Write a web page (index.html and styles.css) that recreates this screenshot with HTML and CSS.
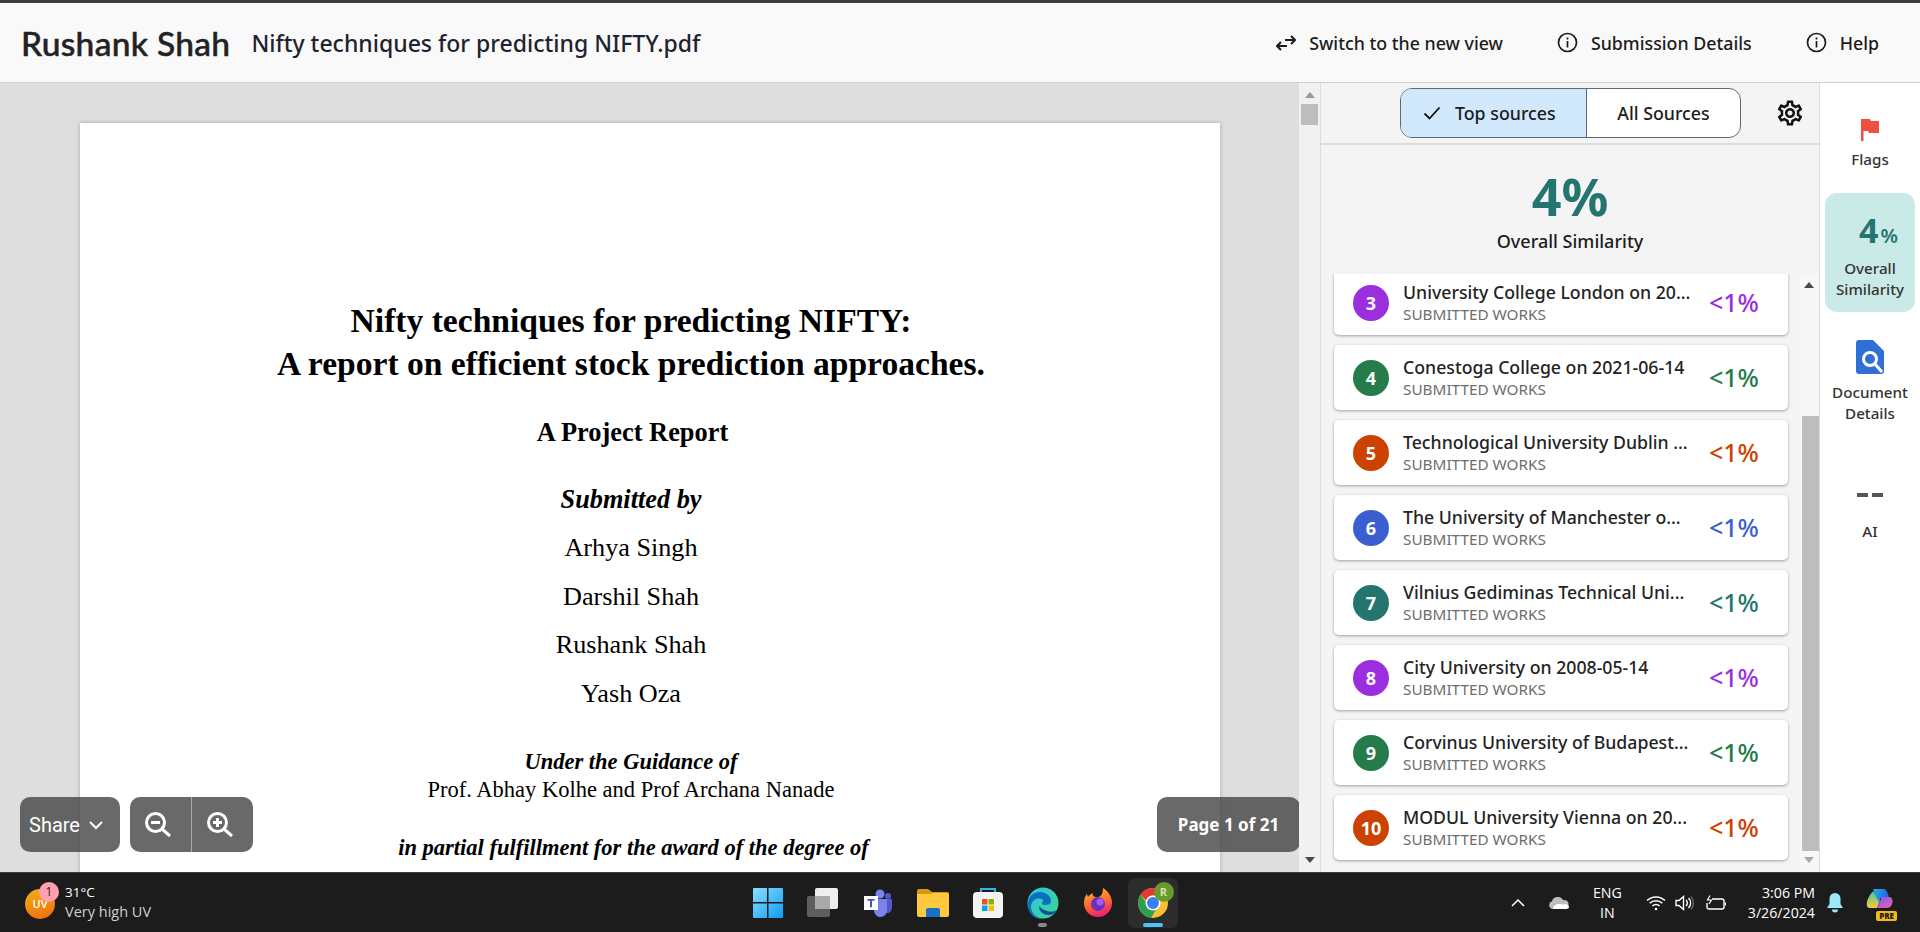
FILE: index.html
```html
<!DOCTYPE html>
<html lang="en">
<head>
    <meta charset="UTF-8">
    <title>Nifty techniques for predicting NIFTY.pdf</title>
    <link rel="stylesheet" href="styles.css">
</head>
<body>
    <header class="topbar">
        <div class="doc-title">
            <span class="author">Rushank Shah</span>
            <span class="file-name">Nifty techniques for predicting NIFTY.pdf</span>
        </div>
        <nav class="top-links">
            <a class="top-link link-switch">
                <svg width="20" height="16" viewBox="0 0 20 16" fill="none" stroke="#1c1c1c" stroke-width="2"><path d="M9 5h10M15 1l4 4-4 4"/><path d="M1 11h10M5 7l-4 4 4 4"/></svg>
                Switch to the new view
            </a>
            <a class="top-link link-details">
                <svg width="21" height="21" viewBox="0 0 21 21" fill="none" stroke="#1c1c1c" stroke-width="1.7"><circle cx="10.500" cy="10.500" r="9"/><path d="M10.500 9v6.500M10.500 5.500v2"/></svg>
                Submission Details
            </a>
            <a class="top-link link-help">
                <svg width="21" height="21" viewBox="0 0 21 21" fill="none" stroke="#1c1c1c" stroke-width="1.7"><circle cx="10.500" cy="10.500" r="9"/><path d="M10.500 9v6.500M10.500 5.500v2"/></svg>
                Help
            </a>
        </nav>
    </header>

    <main class="workspace">
        <section class="viewer">
            <article class="page">
                <h1 class="report-title">Nifty techniques for predicting NIFTY:<br>A report on efficient stock prediction approaches.</h1>
                <p class="report-kind">A Project Report</p>
                <p class="submitted">Submitted by</p>
                <p class="student">Arhya Singh</p>
                <p class="student">Darshil Shah</p>
                <p class="student">Rushank Shah</p>
                <p class="student">Yash Oza</p>
                <p class="guidance">Under the Guidance of</p>
                <p class="guide">Prof. Abhay Kolhe and Prof Archana Nanade</p>
                <p class="fulfil">in partial fulfillment for the award of the degree of</p>
            </article>
            <div class="float-tools">
                <button class="float-btn share-btn">Share
                    <svg width="16" height="10" viewBox="0 0 16 10" fill="none" stroke="#fff" stroke-width="2"><path d="M2 2l6 6 6-6"/></svg>
                </button>
                <div class="float-btn zoom-group">
                    <span class="zoom-cell">
                        <svg width="28" height="28" viewBox="0 0 28 28" fill="none" stroke="#fff" stroke-width="3"><circle cx="11.500" cy="11.500" r="9"/><path d="M18 18l8 7M7 11.500h9"/></svg>
                    </span>
                    <span class="zoom-cell">
                        <svg width="28" height="28" viewBox="0 0 28 28" fill="none" stroke="#fff" stroke-width="3"><circle cx="11.500" cy="11.500" r="9"/><path d="M18 18l8 7M7 11.500h9M11.500 7v9"/></svg>
                    </span>
                </div>
                <div class="float-btn page-count">Page 1 of 21</div>
            </div>
        </section>

        <div class="scroll-track doc-scroll">
            <span class="arrow-up"></span>
            <span class="doc-thumb"></span>
            <span class="arrow-down"></span>
        </div>

        <aside class="sources">
            <div class="sources-head">
                <div class="toggle">
                    <span class="toggle-item is-on">
                        <svg width="18" height="14" viewBox="0 0 18 14" fill="none" stroke="#111" stroke-width="1.800"><path d="M1.500 7.500l5 5L16.500 1.500"/></svg>
                        Top sources
                    </span>
                    <span class="toggle-item">All Sources</span>
                </div>
                <svg class="gear" width="30" height="30" viewBox="0 0 24 24" fill="#111"><path d="M19.43 12.98c.04-.32.07-.64.07-.98 0-.34-.03-.66-.07-.98l2.11-1.65c.19-.15.24-.42.12-.64l-2-3.46c-.09-.16-.26-.25-.44-.25-.06 0-.12.01-.17.03l-2.49 1c-.52-.4-1.08-.73-1.69-.98l-.38-2.65C14.46 2.18 14.25 2 14 2h-4c-.25 0-.46.18-.49.42l-.38 2.65c-.61.25-1.17.59-1.69.98l-2.49-1c-.06-.02-.12-.03-.18-.03-.17 0-.34.09-.43.25l-2 3.46c-.13.22-.07.49.12.64l2.11 1.65c-.04.32-.07.65-.07.98 0 .33.03.66.07.98l-2.11 1.65c-.19.15-.24.42-.12.64l2 3.46c.09.16.26.25.44.25.06 0 .12-.01.17-.03l2.49-1c.52.4 1.08.73 1.69.98l.38 2.65c.03.24.24.42.49.42h4c.25 0 .46-.18.49-.42l.38-2.65c.61-.25 1.17-.59 1.69-.98l2.49 1c.06.02.12.03.18.03.17 0 .34-.09.43-.25l2-3.46c.12-.22.07-.49-.12-.64l-2.11-1.65zM17.45 11.27c.04.31.05.52.05.73 0 .21-.02.43-.05.73l-.14 1.13.89.7 1.08.84-.7 1.21-1.27-.51-1.04-.42-.9.68c-.43.32-.84.56-1.25.73l-1.06.43-.16 1.13-.2 1.35h-1.4l-.19-1.35-.16-1.13-1.06-.43c-.43-.18-.83-.41-1.23-.71l-.91-.7-1.06.43-1.27.51-.7-1.21 1.08-.84.89-.7-.14-1.13c-.03-.31-.05-.54-.05-.74s.02-.43.05-.73l.14-1.13-.89-.7-1.08-.84.7-1.21 1.27.51 1.04.42.9-.68c.43-.32.84-.56 1.25-.73l1.06-.43.16-1.13.2-1.35h1.39l.19 1.35.16 1.13 1.06.43c.43.18.83.41 1.23.71l.91.7 1.06-.43 1.27-.51.7 1.21-1.07.85-.89.7.14 1.13zM12 8c-2.21 0-4 1.79-4 4s1.79 4 4 4 4-1.790 4-4-1.790-4-4-4zm0 6c-1.100 0-2-.9-2-2s.9-2 2-2 2 .9 2 2-.9 2-2 2z"/></svg>
            </div>
            <div class="overall">
                <div class="overall-num">4%</div>
                <div class="overall-label">Overall Similarity</div>
            </div>
            <div class="sources-body">
                <ul class="source-list">
                    <li class="source-card c-purple">
                        <span class="source-num">3</span>
                        <div class="source-text"><div class="source-name">University College London on 20...</div><div class="source-type">SUBMITTED WORKS</div></div>
                        <span class="source-pct">&lt;1%</span>
                    </li>
                    <li class="source-card c-green">
                        <span class="source-num">4</span>
                        <div class="source-text"><div class="source-name">Conestoga College on 2021-06-14</div><div class="source-type">SUBMITTED WORKS</div></div>
                        <span class="source-pct">&lt;1%</span>
                    </li>
                    <li class="source-card c-orange">
                        <span class="source-num">5</span>
                        <div class="source-text"><div class="source-name">Technological University Dublin ...</div><div class="source-type">SUBMITTED WORKS</div></div>
                        <span class="source-pct">&lt;1%</span>
                    </li>
                    <li class="source-card c-blue">
                        <span class="source-num">6</span>
                        <div class="source-text"><div class="source-name">The University of Manchester o...</div><div class="source-type">SUBMITTED WORKS</div></div>
                        <span class="source-pct">&lt;1%</span>
                    </li>
                    <li class="source-card c-teal">
                        <span class="source-num">7</span>
                        <div class="source-text"><div class="source-name">Vilnius Gediminas Technical Uni...</div><div class="source-type">SUBMITTED WORKS</div></div>
                        <span class="source-pct">&lt;1%</span>
                    </li>
                    <li class="source-card c-purple">
                        <span class="source-num">8</span>
                        <div class="source-text"><div class="source-name">City University on 2008-05-14</div><div class="source-type">SUBMITTED WORKS</div></div>
                        <span class="source-pct">&lt;1%</span>
                    </li>
                    <li class="source-card c-green">
                        <span class="source-num">9</span>
                        <div class="source-text"><div class="source-name">Corvinus University of Budapest...</div><div class="source-type">SUBMITTED WORKS</div></div>
                        <span class="source-pct">&lt;1%</span>
                    </li>
                    <li class="source-card c-orange">
                        <span class="source-num">10</span>
                        <div class="source-text"><div class="source-name">MODUL University Vienna on 20...</div><div class="source-type">SUBMITTED WORKS</div></div>
                        <span class="source-pct">&lt;1%</span>
                    </li>
                </ul>
                <div class="scroll-track list-scroll">
                    <span class="arrow-up"></span>
                    <span class="list-thumb"></span>
                    <span class="arrow-down faint"></span>
                </div>
            </div>
        </aside>

        <nav class="rail">
            <div class="rail-item rail-flags">
                <svg width="18" height="22" viewBox="0 0 18 22"><path d="M0 0h9l1 2h8v12H8l-1-2H2.500v10H0z" fill="#f04e3e"/></svg>
                <span>Flags</span>
            </div>
            <div class="rail-item rail-sim">
                <div class="rail-num">4<small>%</small></div>
                <span>Overall<br>Similarity</span>
            </div>
            <div class="rail-item rail-doc">
                <svg width="28" height="34" viewBox="0 0 28 34"><path d="M3 0h14l11 11v20a3 3 0 0 1-3 3H3a3 3 0 0 1-3-3V3a3 3 0 0 1 3-3z" fill="#2f6fd6"/><circle cx="14" cy="19" r="6.500" fill="none" stroke="#fff" stroke-width="3"/><path d="M19 24l7 8" stroke="#fff" stroke-width="3"/></svg>
                <span>Document<br>Details</span>
            </div>
            <div class="rail-item rail-ai">
                <div class="ai-dashes"><i></i><i></i></div>
                <span>AI</span>
            </div>
        </nav>
    </main>

    <footer class="taskbar">
        <div class="weather">
            <div class="uv-badge">UV<span class="uv-count">1</span></div>
            <div class="weather-text">
                <div class="temp">31°C</div>
                <div class="uv-label">Very high UV</div>
            </div>
        </div>

        <div class="task-apps">
            <span class="app">
                <svg width="30" height="30" viewBox="0 0 30 30"><defs><linearGradient id="win" x1="0" y1="0" x2="1" y2="1"><stop offset="0" stop-color="#8be0ff"/><stop offset="1" stop-color="#0f9bf5"/></linearGradient></defs><path d="M1 0h13v14H0V1a1 1 0 0 1 1-1zM15.500 0H29a1 1 0 0 1 1 1v13H15.500zM0 15.500h14V30H1a1 1 0 0 1-1-1zM15.500 15.500H30V29a1 1 0 0 1-1 1H15.500z" fill="url(#win)"/></svg>
            </span>
            <span class="app">
                <svg width="32" height="30" viewBox="0 0 32 30"><rect x="0" y="8" width="23" height="21" rx="2" fill="#5e5e5e"/><rect x="8" y="0" width="23" height="21" rx="2" fill="#eeeeee"/><rect x="8" y="8" width="15" height="13" fill="#a9a9a9"/></svg>
            </span>
            <span class="app">
                <svg width="30" height="30" viewBox="0 0 30 30"><circle cx="17" cy="6" r="4.500" fill="#7b83eb"/><circle cx="25" cy="8" r="3" fill="#5059c9"/><path d="M20 11h9v9a5 5 0 0 1-6 5z" fill="#5059c9"/><path d="M10 11h14v11a6.500 6.500 0 0 1-13 1z" fill="#7b83eb"/><rect x="1" y="8" width="14" height="14" fill="#fff"/><path d="M4.500 11h7v1.800H9v6.500H7v-6.500H4.500z" fill="#4b53bc"/></svg>
            </span>
            <span class="app">
                <svg width="32" height="28" viewBox="0 0 32 28"><path d="M2 0h9l4 3h15a2 2 0 0 1 2 2v4H0V2a2 2 0 0 1 2-2z" fill="#d89a0a"/><path d="M0 5h13l3-1h14a2 2 0 0 1 2 2v20a2 2 0 0 1-2 2H2a2 2 0 0 1-2-2z" fill="#ffc83d"/><path d="M9 21a2 2 0 0 1 2-2h10a2 2 0 0 1 2 2v7H9z" fill="#1572c8"/></svg>
            </span>
            <span class="app">
                <svg width="30" height="30" viewBox="0 0 30 30"><path d="M8 6V1h14v5" fill="none" stroke="#29b6e8" stroke-width="2"/><rect x="0" y="4" width="30" height="26" rx="4" fill="#f3f3f3"/><rect x="9" y="11" width="5.500" height="5.500" fill="#f25022"/><rect x="15.500" y="11" width="5.500" height="5.500" fill="#7fba00"/><rect x="9" y="17.500" width="5.500" height="5.500" fill="#00a4ef"/><rect x="15.500" y="17.500" width="5.500" height="5.500" fill="#ffb900"/></svg>
            </span>
            <span class="app has-dot">
                <svg width="32" height="32" viewBox="0 0 32 32"><defs><linearGradient id="edge" x1="0" y1="0" x2="1" y2="1"><stop offset="0" stop-color="#2fc4e6"/><stop offset="1" stop-color="#3dd68c"/></linearGradient></defs><circle cx="16" cy="16" r="15.500" fill="url(#edge)"/><path d="M1 17C1 9 7 5 13 5c6 0 11 4 11 9 0 3-3 4-6 4-2 0-3-1-3-2 1-2 2-3 0-4-5-2-11 1-11 8 0 7 7 11.500 12 11.500C7 33 1 26 1 17z" fill="#0c6fc2"/><path d="M12 19c0 6 5 9 10 9 3 0 6-2 8-5-3 2-7 2-10 1-4-1-6-3-8-5z" fill="#0b4f9b"/></svg>
            </span>
            <span class="app">
                <svg width="30" height="30" viewBox="0 0 30 30"><defs><linearGradient id="fox" x1="0" y1="0" x2="0.300" y2="1"><stop offset="0" stop-color="#ffbd3f"/><stop offset="0.600" stop-color="#ff6a2a"/><stop offset="1" stop-color="#f0266e"/></linearGradient></defs><path d="M20 0c6 4 9 9 9 15a14 14 0 0 1-28 0c0-4 1-7 3-9l1 3c1-2 3-3 5-4-1 3 1 4 4 4 3 0 6-2 6-9z" fill="url(#fox)"/><circle cx="15" cy="16" r="7" fill="#6b2fbd"/><circle cx="17" cy="14" r="3.500" fill="#a35cf0"/></svg>
            </span>
            <span class="app is-active">
                <svg width="30" height="30" viewBox="0 0 30 30"><circle cx="15" cy="15" r="15" fill="#fbc02d"/><path d="M15 0a15 15 0 0 1 13 7.500H15a7.500 7.500 0 0 0-7 4.800L2.600 6.700A15 15 0 0 1 15 0z" fill="#e53935"/><path d="M2.600 6.700A15 15 0 0 0 13 30l6.500-11a7.500 7.500 0 0 1-11-4z" fill="#2e9e4f"/><circle cx="15" cy="15" r="7.500" fill="#fff"/><circle cx="15" cy="15" r="6" fill="#3a7ff0"/></svg>
                <span class="profile-dot">R</span>
            </span>
        </div>

        <div class="tray">
            <svg class="tray-chevron" width="14" height="8" viewBox="0 0 14 8" fill="none" stroke="#fff" stroke-width="1.500"><path d="M1 7l6-6 6 6"/></svg>
            <svg class="tray-cloud" width="20" height="12" viewBox="0 0 20 12"><path d="M4 12a4 4 0 0 1-1-7.800A6 6 0 0 1 14 3a4.500 4.500 0 0 1 2 9z" fill="#bdbdbd"/><path d="M4 12c0-3 3-5 6-5 2 0 5 1 6 0 2 0 4 2 4 3s-1 2-3 2z" fill="#fff"/></svg>
            <div class="lang">ENG<br>IN</div>
            <svg class="tray-wifi" width="20" height="16" viewBox="0 0 20 16" fill="none" stroke="#fff" stroke-width="1.500"><path d="M1 5.500a13 13 0 0 1 18 0M3.700 8.300a9 9 0 0 1 12.600 0M6.400 11a5 5 0 0 1 7.200 0"/><circle cx="10" cy="14" r="1.300" fill="#fff" stroke="none"/></svg>
            <svg class="tray-sound" width="20" height="16" viewBox="0 0 20 16" fill="none" stroke="#fff" stroke-width="1.400"><path d="M1 5.500h3L8.500 1.500v13L4 10.500H1z"/><path d="M11 5a4 4 0 0 1 0 6M13.500 3a7 7 0 0 1 0 10"/><path d="M16 1.500a10 10 0 0 1 0 13" stroke="#666"/></svg>
            <svg class="tray-battery" width="20" height="16" viewBox="0 0 20 16" fill="none" stroke="#fff" stroke-width="1.400"><path d="M6 4h10a2 2 0 0 1 2 2v6a2 2 0 0 1-2 2H3a2 2 0 0 1-2-2V8"/><path d="M19.500 7.500v3"/><path d="M4 .5L1.500 5h4L3 9" stroke-width="1.200"/></svg>
            <div class="clock"><div>3:06 PM</div><div>3/26/2024</div></div>
            <svg class="tray-bell" width="16" height="20" viewBox="0 0 16 20"><path d="M8 0a5.500 5.500 0 0 1 5.500 5.500V11L16 15H0l2.500-4V5.500A5.500 5.500 0 0 1 8 0z" fill="#9ce8fb"/><path d="M5 16.500h6a3 3 0 0 1-6 0z" fill="#9ce8fb"/></svg>
            <div class="copilot">
                <svg width="28" height="24" viewBox="0 0 28 24"><defs><linearGradient id="cop" x1="0" y1="0" x2="1" y2="0.300"><stop offset="0" stop-color="#1fb6ea"/><stop offset="1" stop-color="#2a5fe0"/></linearGradient><linearGradient id="cop2" x1="0" y1="0" x2="0" y2="1"><stop offset="0" stop-color="#3cc8a0"/><stop offset="1" stop-color="#ffc83d"/></linearGradient><linearGradient id="cop3" x1="0" y1="0" x2="1" y2="1"><stop offset="0" stop-color="#7a5ae8"/><stop offset="1" stop-color="#f05fb0"/></linearGradient></defs><path d="M7 3C2 9 0 14 1 18c.5 2 2 2 4 2h6l3-8C11 9 9 6 7 3z" fill="url(#cop2)"/><path d="M7 1h10c3 0 4 2 5 5l1 3h-8l-2 5L9 7C8 4 8 2 7 1z" fill="url(#cop)"/><path d="M15 9h9c3 1 3 5 2 7-1 3-3 4-6 4h-9l4-9z" fill="url(#cop3)"/></svg>
                <span class="pre-tag">PRE</span>
            </div>
        </div>
    </footer>
</body>
</html>
```

FILE: styles.css
```css
* {
    box-sizing: border-box;
}
html, body {
    height: 100%;
}
body {
    margin: 0;
    width: 1920px;
    height: 932px;
    overflow: hidden;
    display: flex;
    flex-direction: column;
    font-family: 'Noto Sans', sans-serif;
    color: #1c1c1c;
    background: #dedede;
}
p, h1, ul {
    margin: 0;
    padding: 0;
}

/* top bar */
.topbar {
    height: 83px;
    flex: none;
    border-top: 3px solid #3c3c3c;
    border-bottom: 1px solid #cfcfcf;
    background: #f9f9f9;
    display: flex;
    align-items: center;
    justify-content: space-between;
    padding: 0 41px 0 21px;
}
.doc-title {
    display: flex;
    align-items: center;
    gap: 21px;
}
.author {
    font-family: Lato, sans-serif;
    font-size: 33.500px;
    font-weight: 500;
    letter-spacing: 0.3px;
    -webkit-text-stroke: 0.5px #222;
    color: #222;
}
.file-name {
    font-size: 23px;
    font-weight: 500;
    color: #1f2330;
}
.top-links {
    display: flex;
    align-items: center;
}
.top-link {
    display: flex;
    align-items: center;
    gap: 13px;
    font-size: 17.800px;
    font-weight: 500;
}
.link-details {
    margin-left: 54px;
}
.link-help {
    margin-left: 54px;
}

/* main area */
.workspace {
    flex: 1;
    min-height: 0;
    display: flex;
}
.viewer {
    width: 1299px;
    flex: none;
    position: relative;
    overflow: hidden;
    background: #dedede;
    padding: 40px 0 0 80px;
}
.page {
    width: 1140px;
    height: 1400px;
    background: #fff;
    box-shadow: 0 0 4px rgba(0,0,0,0.25);
    padding: 176px 38px 0 0;
    text-align: center;
    font-family: 'Liberation Serif', serif;
    color: #000;
}
.report-title {
    font-size: 33.600px;
    line-height: 43px;
    font-weight: 700;
}
.report-kind {
    margin-top: 32px;
    padding-left: 3px;
    font-size: 26.400px;
    line-height: 30px;
    font-weight: 700;
}
.submitted {
    margin-top: 38px;
    margin-bottom: 9px;
    font-size: 26.300px;
    line-height: 30px;
    font-weight: 700;
    font-style: italic;
}
.student {
    font-size: 26.200px;
    line-height: 48.500px;
}
.guidance {
    margin-top: 30px;
    font-size: 22.500px;
    line-height: 28px;
    font-weight: 700;
    font-style: italic;
}
.guide {
    font-size: 22.500px;
    line-height: 28px;
}
.fulfil {
    margin-top: 30px;
    padding-left: 5px;
    font-size: 22.500px;
    line-height: 28px;
    font-weight: 700;
    font-style: italic;
}

/* controls floating over the page */
.float-tools {
    position: absolute;
    left: 20px;
    right: -1px;
    top: 714px;
    height: 55px;
    display: flex;
    gap: 10px;
}
.float-btn {
    height: 55px;
    border: none;
    border-radius: 10px;
    background: rgba(68,68,68,0.8);
    color: #fff;
    font-family: Roboto, sans-serif;
    display: flex;
    align-items: center;
}
.share-btn {
    width: 100px;
    padding: 0 0 0 9px;
    gap: 8px;
    font-size: 20px;
}
.zoom-group {
    width: 123px;
}
.zoom-cell {
    flex: 1;
    height: 100%;
    display: flex;
    align-items: center;
    justify-content: center;
    padding-right: 6px;
}
.zoom-cell + .zoom-cell {
    border-left: 1px solid #aaa;
}
.page-count {
    width: 143px;
    margin-left: auto;
    justify-content: center;
    font-family: 'Noto Sans', sans-serif;
    font-size: 17px;
    font-weight: 700;
}

/* scrollbars */
.scroll-track {
    flex: none;
    width: 21px;
    background: #f1f1f1;
    display: flex;
    flex-direction: column;
    align-items: center;
}
.arrow-up, .arrow-down {
    width: 0;
    height: 0;
    border-left: 5px solid transparent;
    border-right: 5px solid transparent;
}
.arrow-up {
    border-bottom: 6px solid #9a9a9a;
}
.arrow-down {
    border-top: 6px solid #4a4a4a;
}
.doc-scroll .arrow-up {
    margin-top: 9px;
}
.doc-thumb {
    width: 17px;
    height: 21px;
    margin-top: 6px;
    background: #bdbdbd;
}
.doc-scroll .arrow-down {
    margin-top: auto;
    margin-bottom: 9px;
}

/* sources panel */
.sources {
    width: 500px;
    flex: none;
    display: flex;
    flex-direction: column;
    background: #f4f4f4;
    border-left: 1px solid #dcdcdc;
    border-right: 1px solid #dcdcdc;
}
.sources-head {
    height: 62px;
    flex: none;
    border-bottom: 2px solid #dcdcdc;
    padding: 5px 0 0 79px;
    display: flex;
}
.toggle {
    width: 341px;
    height: 50px;
    display: flex;
    border: 1px solid #5b6a78;
    border-radius: 12px;
    overflow: hidden;
    background: #fff;
    font-size: 17.800px;
    font-weight: 500;
}
.toggle-item {
    display: flex;
    align-items: center;
    justify-content: center;
    flex: 1;
    color: #1c1c1c;
}
.toggle-item.is-on {
    flex: none;
    width: 186px;
    gap: 14px;
    padding-left: 22px;
    justify-content: flex-start;
    background: #d1e8fd;
    border-right: 1px solid #5b6a78;
}
.gear {
    margin: 10px 0 0 34px;
}
.overall {
    height: 129px;
    flex: none;
    text-align: center;
    padding-top: 21px;
}
.overall-num {
    font-size: 52px;
    line-height: 60px;
    font-weight: 700;
    color: #24756f;
}
.overall-label {
    margin-top: 4px;
    font-size: 18px;
    line-height: 22px;
    font-weight: 500;
}
.sources-body {
    flex: 1;
    min-height: 0;
    display: flex;
    overflow: hidden;
}
.source-list {
    list-style: none;
    width: 478px;
    flex: none;
    padding: 0 11px 0 13px;
    margin-top: -4px;
}
.source-card {
    height: 65px;
    margin-bottom: 10px;
    padding: 0 0 0 19px;
    background: #fff;
    border-radius: 5px;
    box-shadow: 0 1px 3px rgba(0,0,0,0.35);
    display: flex;
    align-items: center;
}
.source-num {
    width: 36px;
    height: 36px;
    flex: none;
    border-radius: 50%;
    color: #fff;
    font-size: 18px;
    font-weight: 700;
    display: flex;
    align-items: center;
    justify-content: center;
}
.source-text {
    margin-left: 14px;
    width: 306px;
    flex: none;
}
.source-name {
    font-size: 17.700px;
    line-height: 22px;
    font-weight: 500;
    color: #232323;
    white-space: nowrap;
}
.source-type {
    margin-top: 1px;
    font-size: 15.300px;
    line-height: 21px;
    color: #6d6d6d;
}
.source-pct {
    font-size: 25px;
    font-weight: 500;
    margin-top: -1px;
}
.c-purple .source-num { background: #9b2fe0; }
.c-purple .source-pct { color: #9b2fe0; }
.c-green .source-num { background: #257b4a; }
.c-green .source-pct { color: #257b4a; }
.c-orange .source-num { background: #cc4200; }
.c-orange .source-pct { color: #cc4200; }
.c-blue .source-num { background: #3b5fd1; }
.c-blue .source-pct { color: #3b5fd1; }
.c-teal .source-num { background: #24756f; }
.c-teal .source-pct { color: #24756f; }

.list-scroll {
    width: 20px;
    background: #f7f7f7;
}
.list-scroll .arrow-up {
    margin-top: 8px;
    border-bottom-color: #4a4a4a;
}
.list-thumb {
    width: 17px;
    height: 435px;
    margin-top: auto;
    margin-left: 3px;
    background: #bdbdbd;
}
.list-scroll .arrow-down {
    margin-top: 6px;
    margin-bottom: 9px;
}
.arrow-down.faint {
    border-top-color: #a8a8a8;
}

/* right rail */
.rail {
    flex: 1;
    background: #fff;
    padding: 0 5px;
    display: flex;
    flex-direction: column;
    align-items: stretch;
}
.rail-item {
    display: flex;
    flex-direction: column;
    align-items: center;
    text-align: center;
    font-size: 15.200px;
    line-height: 20.500px;
    font-weight: 500;
    color: #333;
}
.rail-flags {
    height: 110px;
    padding-top: 36px;
    gap: 8px;
}
.rail-sim {
    height: 119px;
    border-radius: 12px;
    background: #c9eae6;
    padding-top: 16px;
}
.rail-num {
    font-size: 34px;
    line-height: 42px;
    font-weight: 700;
    color: #24756f;
    margin: 0 0 1px 17px;
}
.rail-num small {
    font-size: 20px;
    font-weight: 600;
    margin-left: 2px;
}
.rail-doc {
    padding-top: 28px;
    gap: 8px;
}
.rail-ai {
    margin-top: 70px;
}
.ai-dashes {
    display: flex;
    gap: 4px;
    margin-bottom: 24px;
}
.ai-dashes i {
    width: 11px;
    height: 4px;
    background: #555;
}

/* windows taskbar */
.taskbar {
    height: 60px;
    flex: none;
    background: #1c1c1c;
    border-top: 1px solid #3a3a3a;
    display: grid;
    grid-template-columns: 1fr auto 1fr;
    align-items: center;
    color: #fff;
    font-family: 'Open Sans', sans-serif;
}
.weather {
    display: flex;
    align-items: center;
    padding-left: 25px;
    gap: 10px;
}
.uv-badge {
    position: relative;
    width: 30px;
    height: 30px;
    margin-top: 2px;
    border-radius: 50%;
    background: linear-gradient(160deg, #eeb016, #f46a0c);
    font-size: 11px;
    font-weight: 600;
    display: flex;
    align-items: center;
    justify-content: center;
}
.uv-count {
    position: absolute;
    top: -7px;
    right: -4px;
    width: 20px;
    height: 20px;
    border-radius: 50%;
    background: #ff9fb0;
    color: #222;
    font-size: 12px;
    font-weight: 400;
    display: flex;
    align-items: center;
    justify-content: center;
}
.weather-text {
    margin-top: -2px;
}
.temp {
    font-size: 13.500px;
    line-height: 20px;
}
.uv-label {
    font-size: 14.500px;
    line-height: 20px;
    color: #cfcfcf;
}
.task-apps {
    display: flex;
    align-items: center;
    gap: 5px;
}
.app {
    position: relative;
    width: 50px;
    height: 50px;
    border-radius: 6px;
    display: flex;
    align-items: center;
    justify-content: center;
}
.has-dot::after {
    content: "";
    position: absolute;
    left: 20px;
    bottom: 1px;
    width: 9px;
    height: 4px;
    border-radius: 2px;
    background: #8a8a8a;
}
.is-active {
    background: #2c2c2c;
}
.is-active::after {
    content: "";
    position: absolute;
    left: 15px;
    bottom: 1px;
    width: 20px;
    height: 4px;
    border-radius: 2px;
    background: #4cc2ff;
}
.profile-dot {
    position: absolute;
    top: 4px;
    right: 4px;
    width: 20px;
    height: 20px;
    border-radius: 50%;
    background: #6a9a2d;
    color: #cfe3b0;
    font-size: 11px;
    font-weight: 700;
    display: flex;
    align-items: center;
    justify-content: center;
}
.tray {
    display: flex;
    align-items: center;
    justify-content: flex-end;
    font-size: 14.200px;
    line-height: 20px;
}
.tray-chevron {
    margin-right: 24px;
}
.tray-cloud {
    margin-right: 24px;
}
.lang {
    text-align: center;
    margin-right: 24px;
}
.tray-wifi {
    margin-right: 9px;
}
.tray-sound {
    margin-right: 11px;
}
.tray-battery {
    margin-right: 22px;
}
.clock {
    text-align: right;
}
.tray-bell {
    margin-left: 12px;
}
.copilot {
    position: relative;
    width: 30px;
    height: 30px;
    margin: 0 24px 0 23px;
}
.pre-tag {
    position: absolute;
    right: -1px;
    bottom: -3px;
    padding: 0 3px;
    border-radius: 2px;
    background: #f5b81c;
    color: #222;
    font-size: 8px;
    line-height: 10px;
    font-weight: 800;
}
```
